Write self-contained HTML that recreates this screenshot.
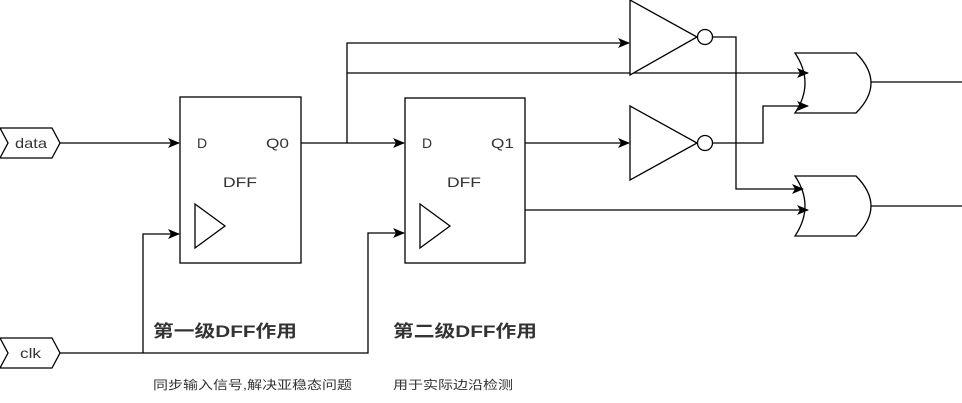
<!DOCTYPE html>
<html><head><meta charset="utf-8"><style>
html,body{margin:0;padding:0;background:#fff;}
svg{display:block;}
text{font-family:"Liberation Sans","Noto Sans CJK SC",sans-serif;fill:#333;}
</style></head><body>
<svg width="962" height="403" viewBox="0 0 962 403" xmlns="http://www.w3.org/2000/svg">
<defs>
<marker id="a" viewBox="0 0 12 10" refX="11" refY="5" markerWidth="12" markerHeight="10" markerUnits="userSpaceOnUse" orient="auto">
<path d="M0,0 L12,5 L0,10 L3,5 z" fill="#000"/>
</marker>
</defs>
<g fill="none" stroke="#000" stroke-width="1.3">
<path d="M0,128 H52 L60,143 L52,158 H0 L8,143 z" fill="#fff"/>
<path d="M0,338 H52 L60,353 L52,368 H0 L8,353 z" fill="#fff"/>
<rect x="180" y="97" width="121" height="166" fill="#fff"/>
<path d="M195,204 L225,226 L195,248 z"/>
<rect x="405" y="98" width="120" height="165" fill="#fff"/>
<path d="M420,204 L450,226 L420,248 z"/>
<path d="M60,143 H179" marker-end="url(#a)"/>
<path d="M60,353 H368 V233 H404" marker-end="url(#a)"/>
<path d="M143,353 V234 H179" marker-end="url(#a)"/>
<path d="M301,143 H404" marker-end="url(#a)"/>
<path d="M347,143 V43 H629" marker-end="url(#a)"/>
<path d="M347,73 H808" marker-end="url(#a)"/>
<path d="M525,143 H629" marker-end="url(#a)"/>
<path d="M525,210 H808" marker-end="url(#a)"/>
<path d="M713,37 H736 V189 H803" marker-end="url(#a)"/>
<path d="M713,143 H763 V106 H808" marker-end="url(#a)"/>
<path d="M630,0 L697,37 L630,75 z" fill="#fff"/>
<circle cx="705" cy="37" r="7.5" fill="#fff"/>
<path d="M630,106 L697,143 L630,180 z" fill="#fff"/>
<circle cx="705" cy="143" r="7.5" fill="#fff"/>
<path d="M795,53 H856 Q871,68 871,83 Q871,98 856,113 H795 Q815,83 795,53 z"/>
<path d="M795,176 H856 Q871,191 871,206 Q871,221 856,236 H795 Q815,206 795,176 z"/>
<path d="M871,82 H962 M871,206 H962"/>
</g>
<text x="15" y="148" font-size="14" textLength="32" lengthAdjust="spacingAndGlyphs">data</text>
<text x="20" y="358" font-size="14" textLength="21" lengthAdjust="spacingAndGlyphs">clk</text>
<text x="197" y="148" font-size="14">D</text>
<text x="266" y="148" font-size="14" textLength="23" lengthAdjust="spacingAndGlyphs">Q0</text>
<text x="223" y="187" font-size="14" textLength="34" lengthAdjust="spacingAndGlyphs">DFF</text>
<text x="422" y="148" font-size="14">D</text>
<text x="491" y="148" font-size="14" textLength="23" lengthAdjust="spacingAndGlyphs">Q1</text>
<text x="447" y="187" font-size="14" textLength="34" lengthAdjust="spacingAndGlyphs">DFF</text>
<text x="153" y="337" font-size="17" font-weight="bold" fill="#222" textLength="144" lengthAdjust="spacingAndGlyphs">第一级DFF作用</text>
<text x="393" y="337" font-size="17" font-weight="bold" fill="#222" textLength="144" lengthAdjust="spacingAndGlyphs">第二级DFF作用</text>
<text x="153" y="389" font-size="12" textLength="199" lengthAdjust="spacingAndGlyphs">同步输入信号,解决亚稳态问题</text>
<text x="393" y="389" font-size="12" textLength="120" lengthAdjust="spacingAndGlyphs">用于实际边沿检测</text>
</svg>
</body></html>
